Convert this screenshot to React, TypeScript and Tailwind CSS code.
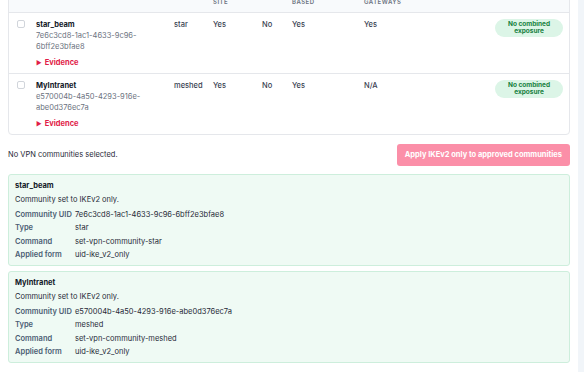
import { useLayoutEffect, useRef } from "react";

type Community = {
	name: string;
	uid: string;
	type: string;
	site: string;
	ikev1: string;
	routeBased: string;
	gateways: string;
	command: string;
};

const communities: Community[] = [
	{
		name: "star_beam",
		uid: "7e6c3cd8-1ac1-4633-9c96-6bff2e3bfae8",
		type: "star",
		site: "Yes",
		ikev1: "No",
		routeBased: "Yes",
		gateways: "Yes",
		command: "set-vpn-community-star",
	},
	{
		name: "MyIntranet",
		uid: "e570004b-4a50-4293-916e-abe0d376ec7a",
		type: "meshed",
		site: "Yes",
		ikev1: "No",
		routeBased: "Yes",
		gateways: "N/A",
		command: "set-vpn-community-meshed",
	},
];

const cols =
	"grid grid-cols-[27px_138px_39px_49px_30px_72px_1fr_auto] items-start";

function HeaderRow() {
	return (
		<div
			className={`${cols} bg-[#f8fafc] border-b border-[#e5e7eb] pt-[5px] pb-[6px] text-[6px] leading-[8px] font-semibold uppercase tracking-[0.08em] text-[#6b7280]`}
		>
			<div />
			<div>Community</div>
			<div>Type</div>
			<div>
				Site to
				<br />
				Site
			</div>
			<div>IKEv1</div>
			<div>
				Route
				<br />
				Based
			</div>
			<div>
				Shared
				<br />
				Gateways
			</div>
			<div className="pr-[6px]">Exposure</div>
		</div>
	);
}

function Row({ c, last }: { c: Community; last: boolean }) {
	const cut = c.uid.lastIndexOf("-") + 1;
	return (
		<div
			className={`${cols} pt-[6px] pb-[5px] text-[7.5px] leading-[11px] ${last ? "" : "border-b border-[#e5e7eb]"}`}
		>
			<div className="pl-[8px] pt-[1px]">
				<div className="w-[8px] h-[8px] rounded-[2px] border border-[#d1d5db] bg-white" />
			</div>
			<div>
				<div className="font-bold text-[#111827]">{c.name}</div>
				<div className="text-[#6b7280] w-[122px]">
					{c.uid.slice(0, cut)}
					<wbr />
					{c.uid.slice(cut)}
				</div>
				<div className="mt-[5px] font-bold text-[#e11d48] flex items-center gap-[3px]">
					<span className="text-[6px]">▶</span>
					Evidence
				</div>
			</div>
			<div className="font-medium text-[#374151]">{c.type}</div>
			<div className="font-medium text-[#374151]">{c.site}</div>
			<div className="font-medium text-[#374151]">{c.ikev1}</div>
			<div className="font-medium text-[#374151]">{c.routeBased}</div>
			<div className="font-medium text-[#374151]">{c.gateways}</div>
			<div className="pr-[6px]">
				<div className="w-[68px] h-[18px] rounded-full bg-[#dcf5e7] text-[#15803d] font-bold text-[6.5px] leading-[7.5px] flex items-center justify-center text-center">
					No combined
					<br />
					exposure
				</div>
			</div>
		</div>
	);
}

function ResultCard({ c }: { c: Community }) {
	const fields: [string, string][] = [
		["Community UID", c.uid],
		["Type", c.type],
		["Command", c.command],
		["Applied form", "uid-ike_v2_only"],
	];
	return (
		<div className="rounded-[3px] border border-[#cdeedc] bg-[#effaf4] px-[6px] pt-[5px] pb-[4px] text-[7.5px] leading-[11px]">
			<div className="font-bold text-[#111827]">{c.name}</div>
			<div className="mt-[3px] text-[#1f2937]">Community set to IKEv2 only.</div>
			<dl className="mt-[3px] grid grid-cols-[60px_1fr] leading-[13.3px]">
				{fields.map(([k, v]) => (
					<div key={k} className="contents">
						<dt className="font-semibold text-[#4b5d73] whitespace-nowrap">{k}</dt>
						<dd className="text-[#1f2937]">{v}</dd>
					</div>
				))}
			</dl>
		</div>
	);
}

export default function App() {
	const scroller = useRef<HTMLDivElement>(null);

	useLayoutEffect(() => {
		if (scroller.current) scroller.current.scrollTop = 24;
	}, []);

	return (
		<div
			ref={scroller}
			className="h-screen overflow-y-auto [scrollbar-width:none] bg-[#f1f5f9] font-['Inter',sans-serif]"
		>
			<div className="w-[578px] bg-white p-[8px] pb-[40px]">
				<div className="rounded-[4px] border border-[#e5e7eb] overflow-hidden">
					<HeaderRow />
					{communities.map((c, i) => (
						<Row key={c.uid} c={c} last={i === communities.length - 1} />
					))}
				</div>

				<div className="mt-[9px] flex items-center justify-between">
					<p className="text-[7.5px] text-[#1f2937]">No VPN communities selected.</p>
					<button
						type="button"
						className="h-[22px] px-[8px] rounded-[3px] bg-[#fb8fa8] text-white text-[7.5px] font-bold"
					>
						Apply IKEv2 only to approved communities
					</button>
				</div>

				<div className="mt-[8px] flex flex-col gap-[5px]">
					{communities.map((c) => (
						<ResultCard key={c.uid} c={c} />
					))}
				</div>
			</div>
		</div>
	);
}
